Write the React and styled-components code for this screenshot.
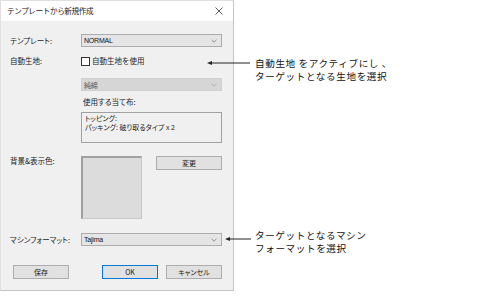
import React from 'react';
import styled, { createGlobalStyle } from 'styled-components';

const GlobalStyle = createGlobalStyle`
  html, body {
    margin: 0;
    padding: 0;
    background: #ffffff;
  }
  body {
    font-family: "Noto Sans CJK JP", "Liberation Sans", sans-serif;
    color: #1a1a1a;
  }
`;

const Page = styled.div`
  position: relative;
  width: 485px;
  height: 301px;
  overflow: hidden;
  background: #fff;
`;

const Dialog = styled.div`
  width: 234px;
  height: 291px;
  box-sizing: border-box;
  background: #f0f0f0;
  border: 1px solid #c4c4c4;
  border-left-color: #e0e0e0;
  border-top-color: #e0e0e0;
  display: flex;
  flex-direction: column;
`;

const TitleBar = styled.div`
  height: 20px;
  background: #fff;
  display: flex;
  align-items: center;
  justify-content: space-between;
  padding: 0 6px 0 6px;
  flex-shrink: 0;
`;

const Title = styled.span`
  font-size: 7.6px;
  letter-spacing: -0.4px;
  color: #222;
  line-height: 1;
`;

const Close = styled.svg`
  width: 8px;
  height: 8px;
  margin-right: 4px;
`;

const Body = styled.div`
  flex: 1;
  padding: 0 11px 0 9px;
  display: flex;
  flex-direction: column;
`;

const Row = styled.div`
  display: grid;
  grid-template-columns: 71px 141px;
  align-items: ${p => (p.$top ? 'start' : 'center')};
  margin-top: ${p => p.$mt}px;
`;

const Label = styled.span`
  font-size: 7.5px;
  line-height: 10px;
  font-feature-settings: "palt";
  color: #222;
  white-space: nowrap;
  grid-column: 1;
`;

const Cell = styled.div`
  grid-column: 2;
  display: flex;
  align-items: ${p => (p.$top ? 'flex-start' : 'center')};
  gap: ${p => p.$gap || 0}px;
`;

const Select = styled.div`
  width: 141px;
  height: 13px;
  box-sizing: border-box;
  background: ${p => (p.$disabled ? '#d6d6d6' : '#e5e5e5')};
  border: 1px solid ${p => (p.$disabled ? '#d0d0d0' : '#acacac')};
  display: flex;
  align-items: center;
  justify-content: space-between;
  padding: 0 4px 0 2px;
  font-size: 7px;
  font-family: "Liberation Sans", "Noto Sans CJK JP", sans-serif;
  color: ${p => (p.$disabled ? '#555' : '#111')};
  letter-spacing: -0.2px;
`;

const Chevron = ({ color }) => (
  <svg width="6" height="4" viewBox="0 0 6 4">
    <polyline points="0.5,0.8 3,3.2 5.5,0.8" fill="none" stroke={color} strokeWidth="0.8" />
  </svg>
);

const CheckLabel = styled.label`
  display: flex;
  align-items: center;
  gap: 2px;
  font-size: 7.5px;
  line-height: 10px;
  color: #222;
`;

const Box = styled.span`
  width: 9px;
  height: 9px;
  box-sizing: border-box;
  background: #fff;
  border: 1px solid #333;
`;

const SubLabel = styled(Label)`
  grid-column: 2;
  padding-left: 2px;
`;

const TextArea = styled.div`
  width: 141px;
  height: 31px;
  box-sizing: border-box;
  border: 1px solid #a0a0a0;
  background: #f0f0f0;
  padding: 1px 3px;
  font-size: 7px;
  line-height: 8.5px;
  font-feature-settings: "palt";
  color: #222;
`;

const Swatch = styled.div`
  width: 61px;
  height: 63px;
  box-sizing: border-box;
  background: #dcdcdc;
  border: 1px solid #c8c8c8;
  border-top: 2px solid #a0a0a0;
  border-left: 2px solid #a0a0a0;
`;

const Button = styled.button`
  width: ${p => p.$w}px;
  height: 14px;
  box-sizing: border-box;
  padding: 0;
  margin: 0;
  background: #e1e1e1;
  border: 1px solid ${p => (p.$primary ? '#0078d7' : '#adadad')};
  font-family: "Noto Sans CJK JP", "Liberation Sans", sans-serif;
  font-size: 7px;
  font-feature-settings: "palt";
  color: #222;
  line-height: 1;
`;

const ButtonRow = styled.div`
  display: flex;
  align-items: center;
  margin-top: 19px;
  padding-left: 3px;
`;

const Spacer = styled.div`
  flex: 1;
`;

const RightButtons = styled.div`
  display: flex;
  gap: 8px;
`;

const Callout = styled.div`
  position: absolute;
  top: ${p => p.$top}px;
  left: ${p => p.$left}px;
  display: flex;
  align-items: flex-start;
`;

const CalloutText = styled.div`
  margin-left: ${p => p.$gap}px;
  font-size: 9.6px;
  line-height: 12.5px;
  letter-spacing: 0.6px;
  color: #111;
  white-space: nowrap;
`;

const Arrow = ({ width, y }) => (
  <svg width={width} height="14" viewBox={`0 0 ${width} 14`} style={{ flexShrink: 0 }}>
    <line x1="3" y1={y} x2={width} y2={y} stroke="#222" strokeWidth="1" />
    <polygon points={`0,${y} 5,${y - 2} 5,${y + 2}`} fill="#222" />
  </svg>
);

export default function App() {
  return (
    <Page>
      <GlobalStyle />
      <Dialog>
        <TitleBar>
          <Title>テンプレートから新規作成</Title>
          <Close viewBox="0 0 8 8">
            <line x1="0.5" y1="0.5" x2="7.5" y2="7.5" stroke="#333" strokeWidth="0.8" />
            <line x1="7.5" y1="0.5" x2="0.5" y2="7.5" stroke="#333" strokeWidth="0.8" />
          </Close>
        </TitleBar>
        <Body>
          <Row $mt={13}>
            <Label>テンプレート:</Label>
            <Cell>
              <Select>
                NORMAL
                <Chevron color="#777" />
              </Select>
            </Cell>
          </Row>
          <Row $mt={9}>
            <Label>自動生地:</Label>
            <Cell>
              <CheckLabel>
                <Box />
                自動生地を使用
              </CheckLabel>
            </Cell>
          </Row>
          <Row $mt={12}>
            <Cell>
              <Select $disabled>
                純綿
                <Chevron color="#a8a8a8" />
              </Select>
            </Cell>
          </Row>
          <Row $mt={6}>
            <SubLabel>使用する当て布:</SubLabel>
          </Row>
          <Row $mt={5}>
            <Cell>
              <TextArea>
                トッピング:
                <br />
                パッキング: 破り取るタイプ x 2
              </TextArea>
            </Cell>
          </Row>
          <Row $mt={13} $top>
            <Label>背景&amp;表示色:</Label>
            <Cell $top $gap={14}>
              <Swatch />
              <Button $w={66}>変更</Button>
            </Cell>
          </Row>
          <Row $mt={14}>
            <Label>マシンフォーマット:</Label>
            <Cell>
              <Select>
                Tajima
                <Chevron color="#777" />
              </Select>
            </Cell>
          </Row>
          <ButtonRow>
            <Button $w={56}>保存</Button>
            <Spacer />
            <RightButtons>
              <Button $w={56} $primary>OK</Button>
              <Button $w={56}>キャンセル</Button>
            </RightButtons>
          </ButtonRow>
        </Body>
      </Dialog>

      <Callout $top={57} $left={207}>
        <Arrow width={43} y={6} />
        <CalloutText $gap={5}>
          自動生地 をアクティブにし 、
          <br />
          ターゲットとなる生地を選択
        </CalloutText>
      </Callout>

      <Callout $top={229} $left={225}>
        <Arrow width={26} y={10} />
        <CalloutText $gap={4}>
          ターゲットとなるマシン
          <br />
          フォーマットを選択
        </CalloutText>
      </Callout>
    </Page>
  );
}
